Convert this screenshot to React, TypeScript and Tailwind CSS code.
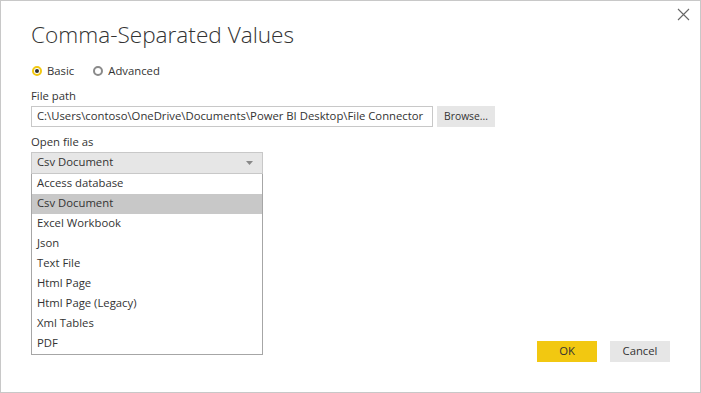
import React, { useState } from 'react';

const options = [
  'Access database',
  'Csv Document',
  'Excel Workbook',
  'Json',
  'Text File',
  'Html Page',
  'Html Page (Legacy)',
  'Xml Tables',
  'PDF',
];

const Radio: React.FC<{ label: string; checked: boolean; onClick: () => void }> = ({ label, checked, onClick }) => (
  <button onClick={onClick} className="flex items-center gap-[5px] text-[11.3px] text-[#333]">
    <span
      className={
        checked
          ? 'flex h-[10px] w-[10px] items-center justify-center rounded-full border-[2px] border-[#f2c811]'
          : 'flex h-[10px] w-[10px] items-center justify-center rounded-full border-[2px] border-[#8a8a8a]'
      }
    >
      {checked && <span className="h-[4px] w-[4px] rounded-full bg-[#333]" />}
    </span>
    {label}
  </button>
);

const App: React.FC = () => {
  const [mode, setMode] = useState<'basic' | 'advanced'>('basic');
  const [selected, setSelected] = useState('Csv Document');

  return (
    <div
      className="relative h-[393px] w-[701px] border border-[#c8c8c8] bg-white text-[#333]"
      style={{ fontFamily: '"Open Sans", "Noto Sans", sans-serif' }}
    >
      <button className="absolute right-[10px] top-[7px] text-[#666]">
        <svg width="13" height="13" viewBox="0 0 13 13" stroke="currentColor" strokeWidth="1.1">
          <path d="M1 1 L12 12 M12 1 L1 12" />
        </svg>
      </button>

      <div className="flex flex-col pl-[30px] pt-[17px]">
        <h1 className="text-[22.6px] font-light leading-[34px] text-[#333]">Comma-Separated Values</h1>

        <div className="mt-[11px] flex items-center gap-[19px] pl-[1px]">
          <Radio label="Basic" checked={mode === 'basic'} onClick={() => setMode('basic')} />
          <Radio label="Advanced" checked={mode === 'advanced'} onClick={() => setMode('advanced')} />
        </div>

        <label className="mt-[7px] text-[11.3px] leading-[18px]">File path</label>
        <div className="mt-[1px] flex items-center gap-[4px]">
          <div className="flex h-[21px] w-[402px] items-center overflow-hidden whitespace-nowrap border border-[#c8c8c8] px-[5px] text-[11.3px]">
            C:\Users\contoso\OneDrive\Documents\Power BI Desktop\File Connector
          </div>
          <button className="h-[21px] w-[58px] bg-[#e6e6e6] text-[10.3px]">Browse...</button>
        </div>

        <label className="mt-[6px] text-[11.3px] leading-[18px]">Open file as</label>
        <div className="mt-[1px] w-[232px]">
          <div className="flex h-[22px] items-center justify-between border border-[#c8c8c8] bg-[#e6e6e6] pl-[5px] pr-[9px] text-[11.3px]">
            <span>{selected}</span>
            <svg width="7" height="4" viewBox="0 0 7 4">
              <path d="M0 0 H7 L3.5 4 Z" fill="#888" />
            </svg>
          </div>
          <div className="flex flex-col border border-t-0 border-[#a6a6a6] bg-white">
            {options.map((o) => (
              <div
                key={o}
                onClick={() => setSelected(o)}
                className={
                  o === selected
                    ? 'flex h-[20px] items-center bg-[#c8c8c8] pl-[5px] text-[11.3px]'
                    : 'flex h-[20px] items-center pl-[5px] text-[11.3px]'
                }
              >
                {o}
              </div>
            ))}
          </div>
        </div>
      </div>

      <div className="absolute bottom-[30px] right-[30px] flex gap-[13px]">
        <button className="h-[21px] w-[60px] bg-[#f2c811] text-[11.3px] text-[#333]">OK</button>
        <button className="h-[21px] w-[60px] bg-[#e6e6e6] text-[11.3px] text-[#333]">Cancel</button>
      </div>
    </div>
  );
};

export default App;
